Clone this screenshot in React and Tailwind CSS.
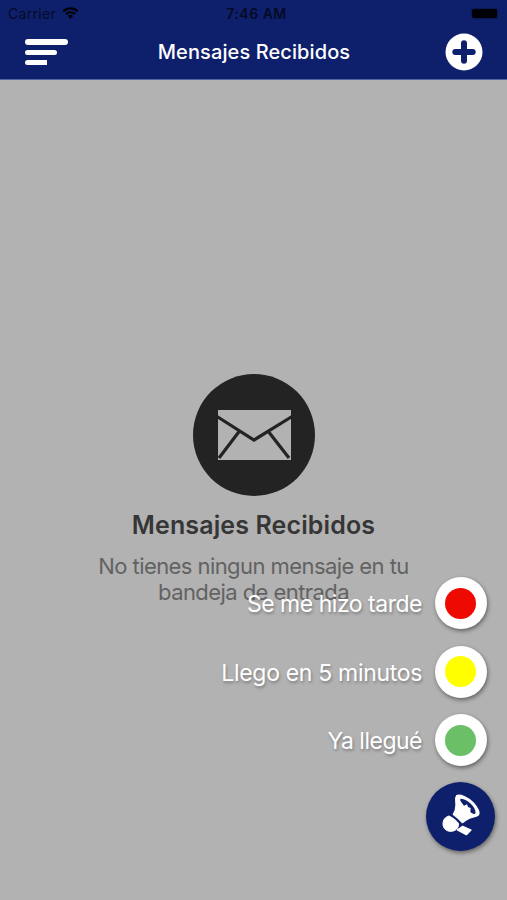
const quickMessages = [
  { label: 'Se me hizo tarde', dot: 'bg-[#ee0a00]', tracking: 'tracking-[-0.48px]' },
  { label: 'Llego en 5 minutos', dot: 'bg-[#ffff00]', tracking: 'tracking-[-0.32px]' },
  { label: 'Ya llegué', dot: 'bg-[#6abf67]', tracking: 'tracking-[-0.5px]' },
];

function StatusBar() {
  return (
    <div className="flex h-[26px] items-center justify-between pl-[8px] pr-[10px] text-[#050a28]">
      <div className="flex w-[124px] items-center gap-[6px]">
        <span className="text-[14px] tracking-[0.3px]">Carrier</span>
        <svg className="h-[12px] w-[17px]" viewBox="0 0 18 13" fill="none" stroke="#000208" strokeWidth="2.4">
          <path d="M1.2 4.7a11.2 11.2 0 0 1 15.6 0" />
          <path d="M4 7.7a7.2 7.2 0 0 1 10 0" />
          <path d="M9 12.6 6.2 9.8a4 4 0 0 1 5.6 0Z" fill="#000208" stroke="none" />
        </svg>
      </div>
      <span className="text-[14px] font-semibold tracking-[0.5px]">7:46 AM</span>
      <div className="flex w-[116px] justify-end">
        <div className="h-[9px] w-[25px] rounded-[2px] bg-[#000106] shadow-[0_0_2px_#000820]" />
      </div>
    </div>
  );
}

function Header() {
  return (
    <header className="h-20 border-b border-[#4e64a0] bg-[#0e206b]">
      <StatusBar />
      <div className="flex h-[52px] items-center justify-between pl-[25px] pr-[24px]">
        <div className="flex w-[43px] flex-col gap-[5px]">
          <div className="h-[6px] w-[43px] rounded-full bg-white" />
          <div className="h-[5px] w-[32px] rounded-full bg-white" />
          <div className="h-[5px] w-[22px] rounded-l-full rounded-r-[1px] bg-white" />
        </div>
        <h1 className="mr-[5px] whitespace-nowrap text-[20px] font-medium tracking-[0.1px] text-white">Mensajes Recibidos</h1>
        <svg className="h-[38px] w-[38px]" viewBox="0 0 38 38">
          <circle cx="19" cy="19" r="18.5" fill="#fff" />
          <path d="M19 10.3v17.4M10.3 19h17.4" stroke="#0e206b" strokeWidth="6" strokeLinecap="round" />
        </svg>
      </div>
    </header>
  );
}

function EmptyInbox() {
  return (
    <section className="flex flex-1 flex-col items-center pt-[294px]">
      <svg className="h-[122px] w-[122px]" viewBox="0 0 122 122">
        <circle cx="61" cy="61" r="61" fill="#232323" />
        <path d="M25 36h73v50H25z" fill="#b2b2b2" />
        <path d="M24 42.5 61 66 99 42.5M46.5 57 26 84M75 57 96 84" fill="none" stroke="#232323" strokeWidth="3.2" />
      </svg>
      <h2 className="mt-[14px] text-[25px] font-semibold leading-[30px] tracking-[0.12px] text-[#363636]">
        Mensajes Recibidos
      </h2>
      <p className="mt-[13px] text-center text-[22px] leading-[26px] tracking-[-0.57px] text-[#626262]">
        No tienes ningun mensaje en tu
        <br />
        bandeja de entrada
      </p>
    </section>
  );
}

function MegaphoneButton() {
  return (
    <button className="-mt-[0.5px] h-[69px] w-[69px] rounded-full bg-[#0e206b] shadow-[1px_2px_4px_rgba(0,0,0,0.45)]">
      <svg className="h-[69px] w-[69px]" viewBox="33 36 207 207" strokeLinejoin="round">
        <path
          d="M125 77c10-5 34 5 50 22 14 15 20 30 15 36-5 5-17 5-28 10-8 4-14 8-20 13-8-10-17-18-27-25 6-9 8-17 8-28 0-14-3-22 2-28Z"
          fill="#fff"
          stroke="#fff"
          strokeWidth="4"
        />
        <path d="M138 86c12 0 29 12 37 24 7 10 8 19 5 21-4 2-10-1-14-6l1-11-8-3-3-8-9 4-8-10c-4-6-5-10-1-11Z" fill="#0e206b" />
        <path
          d="M102 138c11 5 23 14 29 23 0 14-10 23-24 23-14 0-23-10-23-22 0-13 7-21 18-24Z"
          fill="#fff"
          stroke="#fff"
          strokeWidth="3"
        />
        <path d="m127 180 16-11 25 11-14 14Z" fill="#fff" stroke="#fff" strokeWidth="4" />
      </svg>
    </button>
  );
}

function QuickActions() {
  return (
    <div className="absolute right-[12px] top-[577px] flex flex-col items-end">
      {quickMessages.map((m) => (
        <div key={m.label} className="mr-[8.5px] flex h-[68.5px] items-start gap-[12.5px]">
          <span
            className={`whitespace-nowrap text-[23px] leading-[54px] text-white [text-shadow:1px_2px_3px_rgba(0,0,0,0.3)] ${m.tracking}`}
          >
            {m.label}
          </span>
          <div className="flex h-[52px] w-[52px] items-center justify-center rounded-full bg-white shadow-[1px_2px_4px_rgba(0,0,0,0.45)]">
            <div className={`h-[31px] w-[31px] rounded-full ${m.dot}`} />
          </div>
        </div>
      ))}
      <MegaphoneButton />
    </div>
  );
}

export default function App() {
  return (
    <div className="relative flex h-[900px] w-[507px] flex-col overflow-hidden bg-[#b2b2b2] font-['Inter','Liberation_Sans',sans-serif]">
      <Header />
      <EmptyInbox />
      <QuickActions />
    </div>
  );
}
